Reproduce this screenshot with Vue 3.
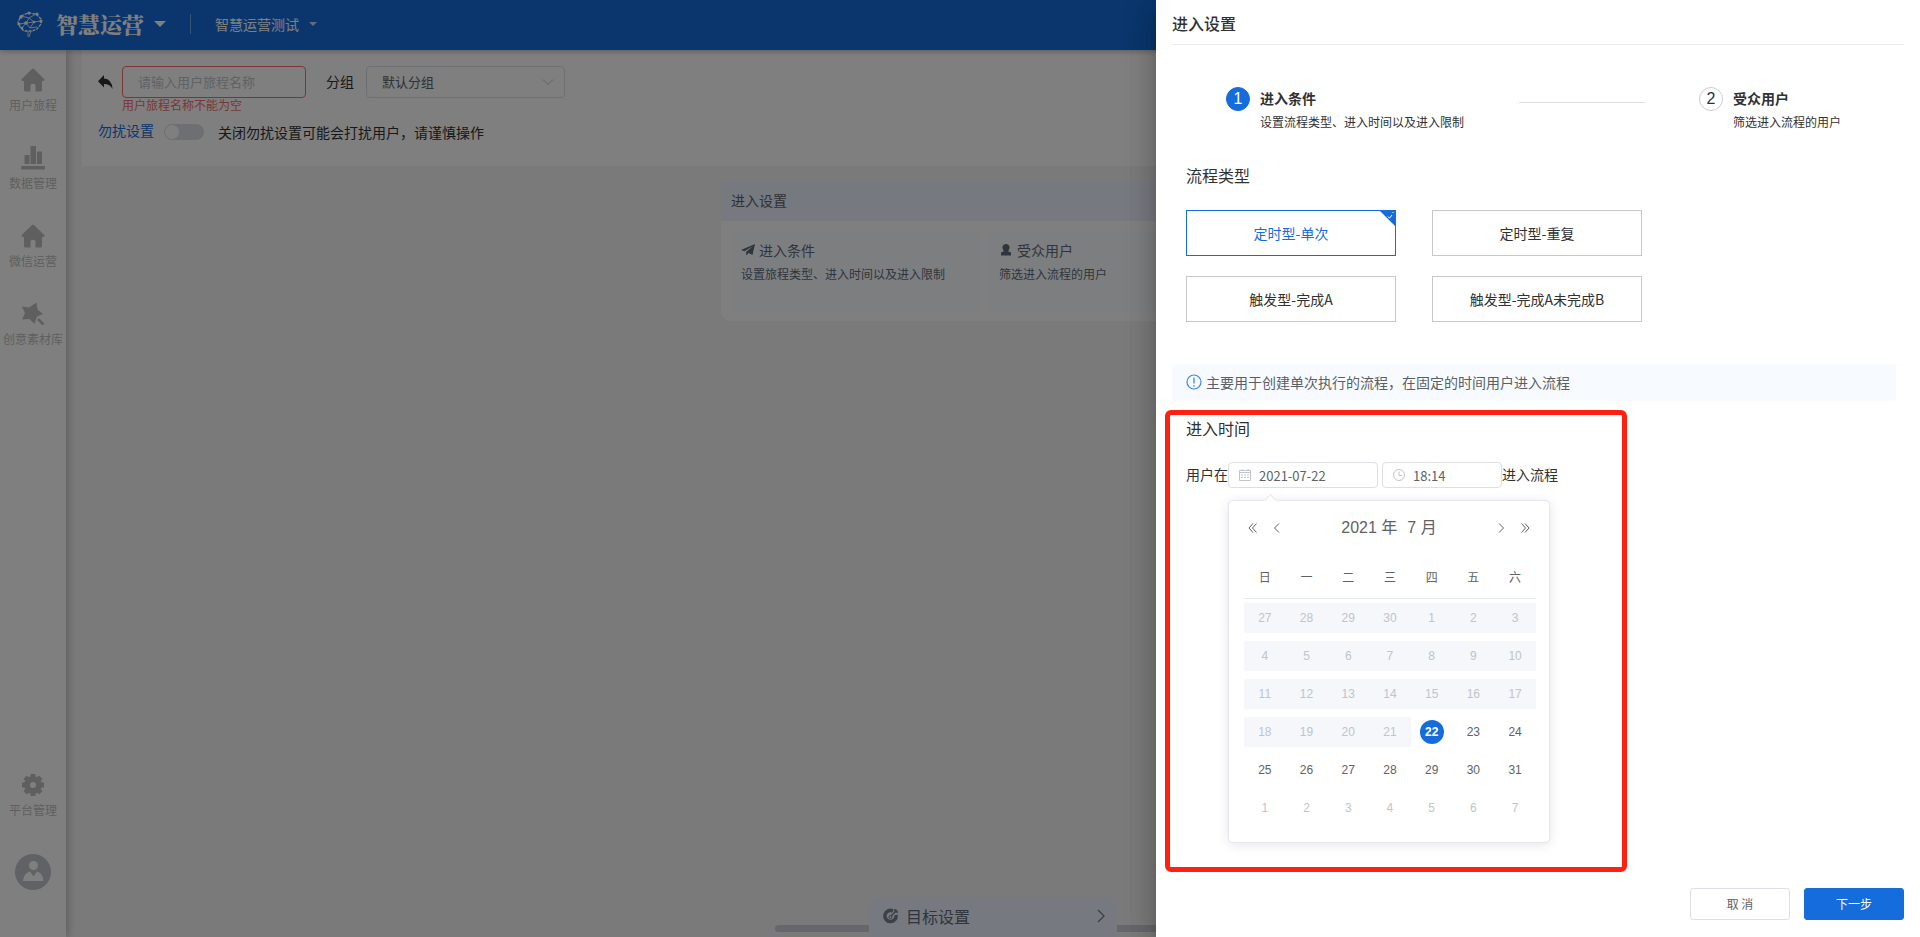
<script setup>
import { ref } from 'vue'

const navItems = [
  { label: '用户旅程', icon: 'home' },
  { label: '数据管理', icon: 'chart' },
  { label: '微信运营', icon: 'home' },
  { label: '创意素材库', icon: 'magic' },
]

const flowTypes = ['定时型-单次', '定时型-重复', '触发型-完成A', '触发型-完成A未完成B']
const selectedType = ref(flowTypes[0])

const journeyName = ref('')
const group = ref('默认分组')
const quiet = ref(false)
const entryDate = ref('2021-07-22')
const entryTime = ref('18:14')

const weekdays = ['日', '一', '二', '三', '四', '五', '六']
const today = 22

const weeks = Array.from({ length: 6 }, (_, row) =>
  Array.from({ length: 7 }, (_, col) => {
    const n = row * 7 + col - 3
    if (n < 1) return { day: n + 30, state: 'disabled' }
    if (n > 31) return { day: n - 31, state: 'next' }
    if (n < today) return { day: n, state: 'disabled' }
    return { day: n, state: n === today ? 'current' : 'available' }
  }),
)
</script>

<template>
  <div class="app">
    <header class="topbar">
      <svg class="logo" viewBox="0 0 28 28" fill="none" stroke="#fff">
        <path d="M5 6 12 3 20 4 25 9 25 14 21 19 16 21 8 21 4 17 2 12Z" stroke-dasharray="3 1" stroke-width="1.3" />
        <path d="M5 6 13 8 20 4M13 8 10 13 3 14M10 13 18 12 25 11M13 8 18 12M10 13 14 18 21 17M10 13 6 18M18 12 14 18M12 21 12 27M15 21 13 27" stroke-width="0.8" />
        <g fill="#fff" stroke="none">
          <circle cx="5" cy="7" r="1.8" /><circle cx="13" cy="3" r="1.6" /><circle cx="21" cy="4" r="1.6" />
          <circle cx="25" cy="11" r="1.6" /><circle cx="3" cy="14" r="1.6" /><circle cx="10" cy="13" r="1.8" /><circle cx="18" cy="12" r="1.3" /><circle cx="6" cy="18" r="1.3" />
        </g>
      </svg>
      <button class="brand">智慧运营<i class="caret"></i></button>
      <span class="split"></span>
      <button class="project">智慧运营测试<i class="caret small"></i></button>
    </header>

    <div class="body">
      <aside class="sidebar">
        <nav class="nav">
          <a v-for="(item, i) in navItems" :key="i" href="#" class="nav-item">
            <svg v-if="item.icon === 'home'" class="nav-icon" viewBox="0 0 24 24" fill="currentColor">
              <path d="M12 0.500Q12.500 .5 13 1L23.500 11.200Q24 12.500 22.500 13H21V22Q21 23.500 19.500 23.500H14.500V17Q12 14.500 9.500 17V23.500H4.500Q3 23.500 3 22V13H1.500Q0 12.500 .5 11.200L11 1Q11.500 .5 12 .5Z" />
            </svg>
            <svg v-else-if="item.icon === 'chart'" class="nav-icon" viewBox="0 0 24 24" fill="currentColor">
              <rect x="3.500" y="9" width="5" height="9" /><rect x="9.500" y="0" width="5.500" height="18" />
              <rect x="16" y="5.500" width="5" height="12.500" /><rect x="0" y="20" width="24" height="3.500" rx="1" />
            </svg>
            <svg v-else class="nav-icon" viewBox="0 0 24 24" fill="currentColor">
              <path d="M15.500 .5 16.500 7.500 22 12 16 14.500 13.500 22 8.500 17 1 17.500 4 11 .8 4.500 8 5.500Z" />
              <path d="M17 17 22.500 22.500" stroke="currentColor" stroke-width="2.500" />
            </svg>
            <span>{{ item.label }}</span>
          </a>
        </nav>
        <div class="nav-bottom">
          <a href="#" class="nav-item">
            <svg class="nav-icon" viewBox="0 0 24 24" fill="none" stroke="currentColor">
              <circle cx="12" cy="12" r="6" stroke-width="6" />
              <path d="M12 1V5M12 19V23M1 12H5M19 12H23M4.200 4.200 7 7M17 17 19.800 19.800M19.800 4.200 17 7M7 17 4.200 19.800" stroke-width="5" />
            </svg>
            <span>平台管理</span>
          </a>
          <button class="avatar" aria-label="账户">
            <svg viewBox="0 0 36 36">
              <circle cx="18" cy="18" r="18" fill="#c0c4cc" />
              <circle cx="18.500" cy="11.500" r="4.500" fill="#fff" />
              <path d="M8 27Q8.500 19 15 17.500L18.500 22.500 22 17.500Q28 19 28.500 27Z" fill="#fff" />
            </svg>
          </button>
        </div>
      </aside>

      <main class="main">
        <section class="settings">
          <div class="form-row">
            <button class="back" aria-label="返回">
              <svg viewBox="0 0 16 16" fill="#303133"><path d="M6 1V4.500Q14 5 14.500 15 12 10 6 10V13.500L0 7.200Z" /></svg>
            </button>
            <div class="name-field">
              <input v-model="journeyName" class="name-input" aria-label="用户旅程名称" placeholder="请输入用户旅程名称" />
              <p class="error">用户旅程名称不能为空</p>
            </div>
            <label class="group-label" for="group">分组</label>
            <div class="select-box">
              <select id="group" v-model="group"><option>默认分组</option></select>
              <svg viewBox="0 0 12 12" fill="none" stroke="#c0c4cc"><path d="M1 3.500 6 8.500 11 3.500" /></svg>
            </div>
          </div>
          <div class="quiet-row">
            <a href="#">勿扰设置</a>
            <input id="quiet" v-model="quiet" type="checkbox" class="switch" />
            <label for="quiet">关闭勿扰设置可能会打扰用户，请谨慎操作</label>
          </div>
        </section>

        <div class="canvas">
          <section class="flow-card">
            <h2>进入设置</h2>
            <div class="flow-grid">
              <article>
                <h3>
                  <svg viewBox="0 0 14 14" fill="currentColor"><path d="M14 1 11.500 12 7.500 10 5.500 12.500 5 9 12 3 3.500 8.300 0 7Z" /></svg>进入条件
                </h3>
                <p>设置旅程类型、进入时间以及进入限制</p>
              </article>
              <article>
                <h3>
                  <svg viewBox="0 0 14 14" fill="currentColor"><path d="M7 1A3.500 3.500 0 0 1 10 6.500Q9.500 8 9 8.200L12 9.500V12.500H2V9.500L5 8.200Q4.500 8 4 6.500A3.500 3.500 0 0 1 7 1Z" /></svg>受众用户
                </h3>
                <p>筛选进入流程的用户</p>
              </article>
            </div>
          </section>
          <div class="scroll-thumb"></div>
          <button class="goal">
            <svg class="goal-icon" viewBox="0 0 16 16" fill="none" stroke="currentColor">
              <path d="M10 3A5.600 5.600 0 1 0 13 7" stroke-width="3.500" />
              <circle cx="7.500" cy="9" r="1.500" /><path d="M8 8 14 2M12 1V4H15" stroke-width="1.500" />
            </svg>
            <span>目标设置</span>
            <svg class="goal-arrow" viewBox="0 0 8 14" fill="none" stroke="currentColor"><path d="M1 1 7 7 1 13" stroke-width="1.300" /></svg>
          </button>
        </div>
      </main>
    </div>

    <div class="mask"></div>

    <section class="drawer" role="dialog" aria-labelledby="drawer-title">
      <h1 id="drawer-title">进入设置</h1>
      <div class="steps">
        <div class="step active">
          <span class="num">1</span>
          <div><h3>进入条件</h3><p>设置流程类型、进入时间以及进入限制</p></div>
        </div>
        <span class="step-line"></span>
        <div class="step">
          <span class="num">2</span>
          <div><h3>受众用户</h3><p>筛选进入流程的用户</p></div>
        </div>
      </div>

      <div class="type-section">
        <h2>流程类型</h2>
        <div class="types">
          <button
            v-for="t in flowTypes"
            :key="t"
            class="type"
            :class="{ selected: t === selectedType }"
            @click="selectedType = t"
          >
            {{ t }}
            <svg v-if="t === selectedType" class="corner" viewBox="0 0 15 15">
              <path d="M0 0H15V15Z" fill="#146ddb" />
              <path d="M8 5.500 9.500 7.200 12 4M13 1V2" fill="none" stroke="#fff" />
            </svg>
          </button>
        </div>
      </div>

      <div class="tip">
        <svg viewBox="0 0 16 16" fill="none" stroke="#3a86e6"><circle cx="8" cy="8" r="7" stroke-width="1.200" /><path d="M8 3.500V9.500M8 11V12.500" stroke-width="1.300" /></svg>
        <span>主要用于创建单次执行的流程，在固定的时间用户进入流程</span>
      </div>

      <div class="time-section">
        <h2>进入时间</h2>
        <div class="time-row">
          <label for="entry-date">用户在</label>
          <div class="picker date">
            <svg viewBox="0 0 14 14" fill="none" stroke="#c0c4cc">
              <path d="M1.500 2.500H12.500V12.500H1.500ZM1.500 4.500H12.500M4 1V3M10 1V3M3 7H5M6 7H8M9 7H11M3 9.500H5M6 9.500H8M9 9.500H11" />
            </svg>
            <input id="entry-date" v-model="entryDate" />
            <div class="calendar">
              <div class="cal-head">
                <button aria-label="上一年"><svg viewBox="0 0 12 12"><path d="M6 1.500 2 6 6 10.500M9.500 1.500 5.500 6 9.500 10.500" /></svg></button>
                <button aria-label="上个月"><svg viewBox="0 0 12 12"><path d="M8 1.500 3.500 6 8 10.500" /></svg></button>
                <div class="cal-title"><span>2021 年</span><span>7 月</span></div>
                <button aria-label="下个月"><svg viewBox="0 0 12 12"><path d="M4 1.500 8.500 6 4 10.500" /></svg></button>
                <button aria-label="下一年"><svg viewBox="0 0 12 12"><path d="M2.500 1.500 6.500 6 2.500 10.500M6 1.500 10 6 6 10.500" /></svg></button>
              </div>
              <table>
                <thead>
                  <tr><th v-for="w in weekdays" :key="w">{{ w }}</th></tr>
                </thead>
                <tbody>
                  <tr v-for="(week, r) in weeks" :key="r">
                    <td v-for="(d, c) in week" :key="c" :class="d.state"><div><span>{{ d.day }}</span></div></td>
                  </tr>
                </tbody>
              </table>
            </div>
          </div>
          <div class="picker time">
            <svg viewBox="0 0 14 14" fill="none" stroke="#c0c4cc"><circle cx="7" cy="7" r="5.500" /><path d="M7 3.500V7.500H10" /></svg>
            <input id="entry-time" v-model="entryTime" aria-label="时间" />
          </div>
          <label for="entry-time">进入流程</label>
        </div>
      </div>

      <footer class="actions">
        <button>取 消</button>
        <button class="primary">下一步</button>
      </footer>
    </section>
  </div>
</template>

<style>
body {
  overflow: hidden;
}
</style>

<style scoped>
* {
  box-sizing: border-box;
}
h1, h2, h3, p {
  margin: 0;
  font-weight: 400;
}
button {
  font: inherit;
  color: inherit;
  padding: 0;
  border: 0;
  background: none;
}
a {
  text-decoration: none;
}
svg {
  display: block;
  flex: none;
}
input, select {
  font: inherit;
  color: inherit;
  outline: 0;
}
.app {
  position: relative;
  display: flex;
  flex-direction: column;
  height: 100vh;
  overflow: hidden;
  font: 14px/20px "Noto Sans CJK SC", "Liberation Sans", sans-serif;
  color: #303133;
  background: #f5f5f5;
}
.topbar {
  position: relative;
  z-index: 2;
  flex: none;
  display: flex;
  align-items: center;
  height: 50px;
  padding: 0 0 2px 16px;
  color: #fff;
  background: #146ddb;
  box-shadow: 0 1px 6px rgba(0, 0, 0, 0.3);
}
.logo {
  width: 28px;
  height: 28px;
}
.brand {
  display: flex;
  align-items: center;
  gap: 10px;
  margin-left: 12px;
  font: 900 22px/30px "Noto Serif CJK SC", "Noto Sans CJK SC", sans-serif;
}
.caret {
  border: 6px solid transparent;
  border-top-color: #fff;
  border-bottom: 0;
}
.caret.small {
  border-width: 4px;
  border-top-color: #c6daf5;
  border-bottom: 0;
}
.split {
  width: 1px;
  height: 20px;
  margin: 0 24px;
  background: rgba(255, 255, 255, 0.4);
}
.project {
  display: flex;
  align-items: center;
  gap: 10px;
}
.body {
  flex: 1;
  display: flex;
  min-height: 0;
}
.sidebar {
  position: relative;
  z-index: 1;
  flex: none;
  display: flex;
  flex-direction: column;
  justify-content: space-between;
  width: 66px;
  padding: 18px 0 47px;
  background: #fff;
  box-shadow: 2px 0 8px rgba(0, 0, 0, 0.25);
}
.nav {
  display: flex;
  flex-direction: column;
  gap: 31px;
}
.nav-item {
  display: flex;
  flex-direction: column;
  align-items: center;
  gap: 3px;
  color: #bfbfbf;
  font-size: 12px;
  white-space: nowrap;
}
.nav-icon {
  width: 24px;
  height: 24px;
}
.nav-bottom {
  display: flex;
  flex-direction: column;
  align-items: center;
  gap: 34px;
}
.avatar {
  width: 36px;
  height: 36px;
}
.main {
  flex: 1;
  display: flex;
  flex-direction: column;
  min-width: 0;
  padding-left: 16px;
}
.settings {
  padding: 16px 16px 19px;
  background: #fff;
}
.form-row {
  display: flex;
  align-items: flex-start;
}
.back {
  width: 16px;
  height: 32px;
}
.back svg {
  width: 16px;
  height: 16px;
}
.name-field {
  width: 184px;
  margin-left: 8px;
}
.name-input {
  display: block;
  width: 100%;
  height: 32px;
  padding: 0 15px 2px;
  border: 1px solid #f56c6c;
  border-radius: 4px;
  background: #fff;
  font-size: 13px;
}
.name-input::placeholder {
  color: #c0c4cc;
}
.error {
  color: #f56c6c;
  font-size: 12px;
  line-height: 14px;
}
.group-label {
  margin: 0 12px 0 20px;
  line-height: 30px;
}
.select-box {
  position: relative;
  width: 199px;
}
.select-box select {
  appearance: none;
  width: 100%;
  height: 32px;
  padding: 0 15px;
  border: 1px solid #dcdfe6;
  border-radius: 4px;
  background: #fff;
  color: #606266;
  font-size: 13px;
}
.select-box svg {
  position: absolute;
  top: 10px;
  right: 11px;
  width: 12px;
  height: 12px;
}
.quiet-row {
  display: flex;
  align-items: center;
  height: 30px;
  margin-top: 5px;
}
.quiet-row a {
  height: 24px;
  color: #146ddb;
}
.switch {
  appearance: none;
  display: flex;
  width: 40px;
  height: 16px;
  margin: 0 14px 0 10px;
  padding: 1px;
  border-radius: 8px;
  background: #dcdfe6;
}
.switch::before {
  content: "";
  width: 14px;
  height: 14px;
  border-radius: 7px;
  background: #fff;
}
.canvas {
  position: relative;
  flex: 1;
}
.flow-card {
  width: 784px;
  margin: 16px 0 0 639px;
  background: #fff;
  border-radius: 0 0 10px 10px;
}
.flow-card h2 {
  padding: 0 10px 2px;
  background: #ecf2ff;
  color: #606266;
  font-size: 14px;
  line-height: 37px;
}
.flow-grid {
  display: grid;
  grid-template-columns: repeat(3, 1fr);
  gap: 10px;
  padding: 10px;
  color: #606b7b;
}
.flow-grid article {
  height: 80px;
  padding: 9px 10px;
  background: #fbfdff;
}
.flow-grid h3 {
  display: flex;
  align-items: center;
  gap: 4px;
  font-size: 14px;
  line-height: 20px;
}
.flow-grid h3 svg {
  width: 14px;
  height: 14px;
}
.flow-grid p {
  margin-top: 4px;
  font-size: 12px;
  line-height: 20px;
}
.scroll-thumb {
  position: absolute;
  left: 693px;
  right: 0;
  bottom: 5px;
  height: 7px;
  border-radius: 4px;
  background: #cbced8;
}
.goal {
  position: absolute;
  left: 787px;
  bottom: 0;
  display: flex;
  align-items: center;
  width: 248px;
  height: 40px;
  padding: 0 12px 2px 14px;
  border-radius: 10px 10px 0 0;
  background: #ecf2ff;
  color: #79818f;
  font-size: 16px;
}
.goal span {
  flex: 1;
  margin-left: 7px;
  text-align: left;
  color: #606b7b;
}
.goal-icon {
  width: 16px;
  height: 16px;
}
.goal-arrow {
  width: 8px;
  height: 14px;
}
.mask {
  position: absolute;
  inset: 0;
  z-index: 3;
  background: rgba(0, 0, 0, 0.5);
}
.drawer {
  position: absolute;
  z-index: 4;
  top: 0;
  right: 0;
  bottom: 0;
  display: flex;
  flex-direction: column;
  width: 764px;
  padding: 0 16px 17px;
  background: #fff;
  box-shadow: 0 8px 10px -5px rgba(0, 0, 0, 0.2), 0 16px 24px 2px rgba(0, 0, 0, 0.14), 0 6px 30px 5px rgba(0, 0, 0, 0.12);
}
.drawer h1 {
  padding: 11px 0 9px;
  border-bottom: 1px solid #ebebeb;
  font-size: 16px;
  font-weight: 500;
  line-height: 24px;
}
.drawer h2 {
  font-size: 16px;
  line-height: 24px;
}
.steps {
  display: flex;
  justify-content: space-between;
  padding: 42px 63px 0 54px;
}
.step {
  display: flex;
  align-items: flex-start;
  gap: 10px;
}
.num {
  width: 24px;
  height: 24px;
  border: 1px solid #ccc;
  border-radius: 50%;
  font-family: "Liberation Sans", sans-serif;
  font-size: 16px;
  line-height: 22px;
  text-align: center;
}
.active .num {
  border-color: #146ddb;
  background: #146ddb;
  color: #fff;
}
.step h3 {
  font-size: 14px;
  font-weight: 700;
  line-height: 22px;
}
.step p {
  font-size: 12px;
  line-height: 26px;
}
.step-line {
  width: 126px;
  height: 1px;
  margin-top: 15px;
  background: #dedede;
}
.type-section {
  padding: 28px 14px 0;
}
.types {
  display: grid;
  grid-template-columns: 210px 210px;
  gap: 20px 36px;
  margin-top: 23px;
}
.type {
  position: relative;
  height: 46px;
  border: 1px solid #c8c8c8;
  background: #fff;
}
.type.selected {
  border-color: #146ddb;
  color: #146ddb;
}
.corner {
  position: absolute;
  top: 0;
  right: 0;
  width: 15px;
  height: 15px;
}
.tip {
  display: flex;
  align-items: center;
  gap: 4px;
  height: 37px;
  margin: 42px 8px 0 0;
  padding: 0 0 2px 14px;
  background: #f7fbff;
  color: #5a5e66;
}
.tip svg {
  width: 16px;
  height: 16px;
}
.time-section {
  width: 462px;
  height: 462px;
  margin: 9px 0 0 -7px;
  padding: 1px 16px;
  border: 5px solid #ff2012;
  border-radius: 6px;
}
.time-row {
  display: flex;
  align-items: center;
  margin-top: 22px;
}
.time-row label {
  padding-bottom: 2px;
}
.picker {
  position: relative;
}
.picker.date {
  width: 150px;
  margin-right: 4px;
}
.picker.time {
  width: 120px;
}
.picker > svg {
  position: absolute;
  top: 6px;
  left: 10px;
  width: 14px;
  height: 14px;
}
.picker input {
  display: block;
  width: 100%;
  height: 26px;
  padding: 0 10px 0 30px;
  border: 1px solid #dcdfe6;
  border-radius: 4px;
  background: none;
  color: #606266;
  font-size: 13px;
}
.calendar {
  position: absolute;
  top: 38px;
  left: 0;
  width: 322px;
  padding: 12px 14px 15px;
  border: 1px solid #e4e7ed;
  border-radius: 4px;
  background: #fff;
  box-shadow: 0 2px 12px rgba(0, 0, 0, 0.1);
  color: #606266;
  font-family: "Liberation Sans", "Noto Sans CJK SC", sans-serif;
}
.calendar::before {
  content: "";
  position: absolute;
  top: -5px;
  left: 37px;
  width: 8px;
  height: 8px;
  border: solid #e4e7ed;
  border-width: 1px 0 0 1px;
  background: #fff;
  transform: rotate(45deg);
}
.cal-head {
  display: flex;
  align-items: center;
  gap: 12px;
  height: 30px;
  padding: 0 4px;
}
.cal-head svg {
  width: 12px;
  height: 12px;
  fill: none;
  stroke: #606266;
}
.cal-title {
  flex: 1;
  display: flex;
  justify-content: center;
  gap: 10px;
  font-size: 16px;
}
table {
  width: 292px;
  margin-left: 1px;
  margin-top: 16px;
  border-collapse: collapse;
  table-layout: fixed;
  font-size: 12px;
}
th {
  height: 39px;
  padding: 0;
  border-bottom: 1px solid #e6eaf2;
  font-weight: 400;
}
td {
  height: 38px;
  padding: 4px 0;
  text-align: center;
}
td div {
  display: flex;
  align-items: center;
  justify-content: center;
  height: 30px;
}
td span {
  width: 24px;
  line-height: 24px;
  border-radius: 50%;
}
td.disabled div {
  background: #f5f7fa;
}
td.disabled, td.next {
  color: #c0c4cc;
}
td.current span {
  background: #146ddb;
  color: #fff;
  font-weight: 700;
}
.actions {
  display: flex;
  justify-content: flex-end;
  gap: 14px;
  margin-top: auto;
}
.actions button {
  width: 100px;
  height: 32px;
  border: 1px solid #dcdfe6;
  border-radius: 3px;
  color: #606266;
  font-size: 12px;
}
.actions .primary {
  border-color: #146ddb;
  background: #146ddb;
  color: #fff;
}
</style>
